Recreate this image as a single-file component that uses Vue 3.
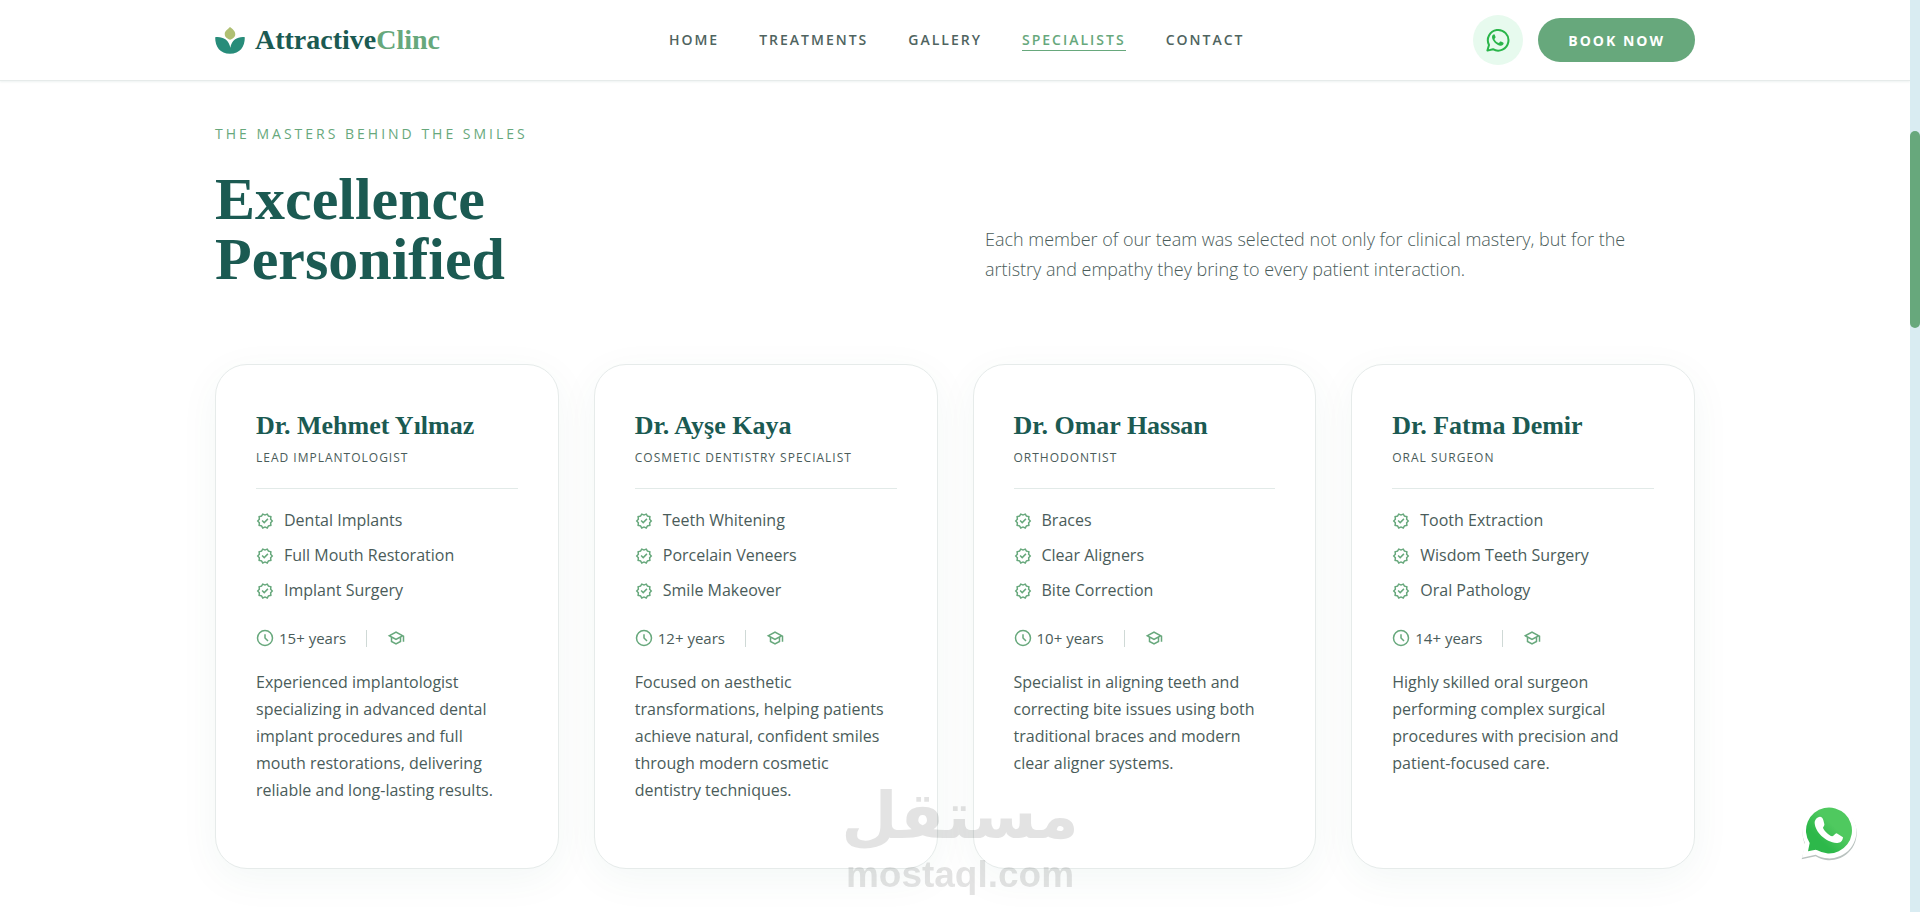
<script setup>
import { ref } from 'vue'

const links = ['Home', 'Treatments', 'Gallery', 'Specialists', 'Contact']
const active = ref('Specialists')

const doctors = [
  {
    name: 'Dr. Mehmet Yılmaz',
    role: 'Lead Implantologist',
    skills: ['Dental Implants', 'Full Mouth Restoration', 'Implant Surgery'],
    years: '15+ years',
    bio: 'Experienced implantologist specializing in advanced dental implant procedures and full mouth restorations, delivering reliable and long-lasting results.',
  },
  {
    name: 'Dr. Ayşe Kaya',
    role: 'Cosmetic Dentistry Specialist',
    skills: ['Teeth Whitening', 'Porcelain Veneers', 'Smile Makeover'],
    years: '12+ years',
    bio: 'Focused on aesthetic transformations, helping patients achieve natural, confident smiles through modern cosmetic dentistry techniques.',
  },
  {
    name: 'Dr. Omar Hassan',
    role: 'Orthodontist',
    skills: ['Braces', 'Clear Aligners', 'Bite Correction'],
    years: '10+ years',
    bio: 'Specialist in aligning teeth and correcting bite issues using both traditional braces and modern clear aligner systems.',
  },
  {
    name: 'Dr. Fatma Demir',
    role: 'Oral Surgeon',
    skills: ['Tooth Extraction', 'Wisdom Teeth Surgery', 'Oral Pathology'],
    years: '14+ years',
    bio: 'Highly skilled oral surgeon performing complex surgical procedures with precision and patient-focused care.',
  },
]
</script>

<template>
  <div class="page">
    <header class="header">
      <div class="container header-row">
        <a class="logo" href="#">
          <svg class="logo-mark" viewBox="45 80 90 82" aria-hidden="true">
            <path fill="#278c7a" d="M45 111C66 108 87 118 91 143C95 118 116 108 135 111C135 141 120 161 90 161C60 161 45 141 45 111Z" />
            <path fill="#afc073" d="M90 80C98 86 106 92 106 102C106 112 98 115 91 119C82 115 74 111 74 101C74 92 83 87 90 80Z" />
          </svg>
          <span>Attractive<span class="logo-accent">Clinc</span></span>
        </a>
        <nav class="nav">
          <a
            v-for="link in links"
            :key="link"
            href="#"
            class="nav-link"
            :class="{ active: link === active }"
            @click.prevent="active = link"
          >{{ link }}</a>
        </nav>
        <div class="actions">
          <a class="chat" href="#" aria-label="WhatsApp">
            <svg viewBox="0 0 24 24" aria-hidden="true">
              <path fill="none" stroke="#2ab54a" stroke-width="2" stroke-linejoin="round" d="M1.4 22.6L3 17A10.300 10.300 0 1 1 7 21.200Z" />
              <path fill="#2ab54a" d="M8.200 6.300c-.9.1-2.300 1-2.200 2.900.2 3.300 4.600 8.300 8.600 8.600 1.700.1 2.900-1 3-2.200.1-.6-.1-.9-.5-1.100l-2.100-1c-.5-.2-.8-.1-1.100.3l-.7.9c-.3.3-.6.3-1 .1-1.600-.8-2.800-1.900-3.600-3.400-.2-.4-.1-.6.2-.9l.6-.8c.2-.3.2-.6.1-.9l-.8-2c-.1-.3-.3-.5-.5-.5z" />
            </svg>
          </a>
          <button type="button" class="book">Book Now</button>
        </div>
      </div>
    </header>

    <main class="container">
      <section class="intro">
        <div>
          <p class="eyebrow">The Masters Behind the Smiles</p>
          <h1>Excellence<br />Personified</h1>
        </div>
        <p class="lead">
          Each member of our team was selected not only for clinical mastery, but for the artistry and empathy they bring to every patient interaction.
        </p>
      </section>

      <section class="cards">
        <article v-for="doc in doctors" :key="doc.name" class="card">
          <div class="card-head">
            <h2>{{ doc.name }}</h2>
            <p class="role">{{ doc.role }}</p>
          </div>
          <ul class="skills">
            <li v-for="skill in doc.skills" :key="skill">
              <svg class="icon" viewBox="0 -960 960 960" aria-hidden="true">
                <path d="m344-60-76-128-144-32 14-148-98-112 98-112-14-148 144-32 76-128 136 58 136-58 76 128 144 32-14 148 98 112-98 112 14 148-144 32-76 128-136-58-136 58Zm34-102 102-44 104 44 56-96 110-26-10-112 74-84-74-86 10-112-110-24-58-96-102 44-104-44-56 96-110 24 10 112-74 86 74 84-10 114 110 24 58 96Zm60-176 226-226-56-58-170 170-86-84-56 56 142 142Z" />
              </svg>
              {{ skill }}
            </li>
          </ul>
          <div class="meta">
            <span class="years">
              <svg class="icon" viewBox="0 0 24 24" aria-hidden="true">
                <circle class="line" cx="12" cy="12" r="10" />
                <path class="line" d="M12 7v5l4 4" />
              </svg>
              {{ doc.years }}
            </span>
            <span class="divider"></span>
            <svg class="icon" viewBox="0 -960 960 960" aria-hidden="true">
              <path d="M480-120 200-272v-240L40-600l440-240 440 240v320h-80v-276l-80 44v240L480-120Zm0-332 274-148-274-148-274 148 274 148Zm0 241 200-108v-151L480-360 280-470v151l200 108Z" />
            </svg>
          </div>
          <p class="bio">{{ doc.bio }}</p>
        </article>
      </section>
    </main>

    <a class="float" href="#" aria-label="Chat on WhatsApp">
      <svg viewBox="124 130 168 174" aria-hidden="true">
        <path fill="#b9c2bf" d="M126 299L137 256A81 81 0 1 1 168 290Z" />
        <path fill="#fff" d="M127 294L136 250A81 81 0 1 1 168 285Z" />
        <path fill="url(#bubble)" d="M145 275L150 250A69 69 0 1 1 173 272L168 270Z" />
        <path fill="#fff" d="M181 171c-9 1-16 9-16 19 2 27 31 57 66 60 10 1 18-5 19-17l-19-12c-5 0-9 8-13 9-11-3-25-17-28-26 2-4 5-7 4-11-2-9-4-22-13-22z" />
        <defs>
          <linearGradient id="bubble" x1="0" y1="1" x2="1" y2="0">
            <stop offset="0.3" stop-color="#2db84a" />
            <stop offset="0.6" stop-color="#4fc95f" />
          </linearGradient>
        </defs>
      </svg>
    </a>

    <div class="watermark">
      <span class="wm-arabic" lang="ar" dir="rtl">مستقل</span>
      <span class="wm-latin">mostaql.com</span>
    </div>

    <div class="rail"><div class="thumb"></div></div>
  </div>
</template>

<style>
body {
  margin: 0;
  background: #fff;
}
</style>

<style scoped>
.page {
  padding-right: 10px;
  min-height: 100vh;
  box-sizing: border-box;
  font-family: 'Open Sans', sans-serif;
  color: #4a5c5a;
}
.page a {
  text-decoration: none;
}
.container {
  max-width: 1480px;
  margin: 0 auto;
}
.header {
  position: sticky;
  top: 0;
  z-index: 5;
  background: #fff;
  border-bottom: 1px solid #e6ebea;
  box-shadow: 0 1px 2px rgba(27, 90, 82, 0.08);
}
.header-row {
  display: flex;
  align-items: center;
  justify-content: space-between;
  height: 80px;
}
.logo {
  display: flex;
  align-items: center;
  gap: 10px;
  font-family: 'Liberation Serif', serif;
  font-weight: 700;
  font-size: 28px;
  line-height: 36px;
  color: #1b5a52;
}
.logo-mark {
  width: 30px;
  height: 27px;
}
.logo-accent {
  color: #67a87c;
}
.nav {
  display: flex;
  gap: 40px;
}
.nav-link {
  font-size: 14px;
  font-weight: 600;
  line-height: 20px;
  letter-spacing: 2px;
  text-transform: uppercase;
  color: #4f6460;
  border-bottom: 1px solid transparent;
}
.nav-link.active {
  color: #67a87c;
  border-color: #67a87c;
}
.actions {
  display: flex;
  align-items: center;
  gap: 15px;
}
.chat {
  display: flex;
  align-items: center;
  justify-content: center;
  width: 50px;
  height: 50px;
  border-radius: 50%;
  background: #e7faee;
}
.chat svg {
  width: 24px;
  height: 24px;
}
.book {
  height: 44px;
  padding: 0 30px;
  border: 0;
  border-radius: 22px;
  background: #67a87c;
  color: #fff;
  font-family: inherit;
  font-size: 14px;
  font-weight: 700;
  letter-spacing: 2px;
  text-transform: uppercase;
  cursor: pointer;
}

.intro {
  display: grid;
  grid-template-columns: 1fr 1fr;
  gap: 60px;
  align-items: end;
  padding: 43px 0 75px;
}
.eyebrow {
  margin: 0 0 25px;
  font-size: 14px;
  line-height: 20px;
  letter-spacing: 3px;
  text-transform: uppercase;
  color: #67a87c;
}
h1 {
  margin: 0;
  font-family: 'Liberation Serif', serif;
  font-size: 60px;
  line-height: 60px;
  color: #1b5a52;
}
.lead {
  max-width: 670px;
  margin: 0;
  padding-bottom: 5px;
  font-size: 18px;
  font-weight: 300;
  line-height: 30px;
}

.cards {
  display: grid;
  grid-template-columns: repeat(4, 1fr);
  gap: 35px;
}
.card {
  padding: 40px 40px 64px;
  border: 1px solid #e6ebea;
  border-radius: 32px;
  background: #fff;
  box-shadow: 0 10px 40px rgba(27, 90, 82, 0.05);
}
.card-head {
  padding-bottom: 22px;
  border-bottom: 1px solid #e2eae8;
}
h2 {
  margin: 0 0 3px;
  font-family: 'Liberation Serif', serif;
  font-size: 26px;
  line-height: 42px;
  color: #1b5a52;
}
.role {
  margin: 0;
  font-size: 12px;
  line-height: 16px;
  letter-spacing: 1px;
  text-transform: uppercase;
}
.skills {
  display: flex;
  flex-direction: column;
  gap: 10px;
  margin: 0;
  padding: 19px 0 23px;
  list-style: none;
}
.skills li {
  display: flex;
  align-items: center;
  gap: 10px;
  font-size: 16px;
  line-height: 25px;
}
.icon {
  flex: none;
  width: 18px;
  height: 18px;
  fill: #67a87c;
}
.line {
  fill: none;
  stroke: #67a87c;
  stroke-width: 2;
}
.meta {
  display: flex;
  align-items: center;
  gap: 20px;
  margin-bottom: 19px;
  font-size: 15px;
  line-height: 24px;
}
.years {
  display: flex;
  align-items: center;
  gap: 5px;
}
.divider {
  width: 1px;
  height: 17px;
  background: #cfd9d6;
}
.bio {
  margin: 0;
  padding-right: 6px;
  font-size: 16px;
  line-height: 27px;
}

.float {
  position: fixed;
  right: 63px;
  bottom: 51px;
  z-index: 6;
}
.float svg {
  display: block;
  width: 56px;
  height: 58px;
}
.watermark {
  position: fixed;
  left: 0;
  right: 0;
  bottom: 16px;
  z-index: 7;
  display: flex;
  flex-direction: column;
  align-items: center;
  opacity: 0.11;
  color: #000;
  font-weight: 700;
  pointer-events: none;
}
.wm-arabic {
  font-family: 'DejaVu Sans', sans-serif;
  font-size: 65px;
  line-height: 76px;
}
.wm-latin {
  font-family: 'Liberation Sans', sans-serif;
  font-size: 37px;
  line-height: 42px;
}
.rail {
  position: fixed;
  top: 0;
  right: 0;
  bottom: 0;
  z-index: 8;
  width: 10px;
  padding-top: 131px;
  box-sizing: border-box;
  background: #d9ecf2;
}
.thumb {
  height: 197px;
  border-radius: 5px;
  background: #67a87c;
}
</style>
